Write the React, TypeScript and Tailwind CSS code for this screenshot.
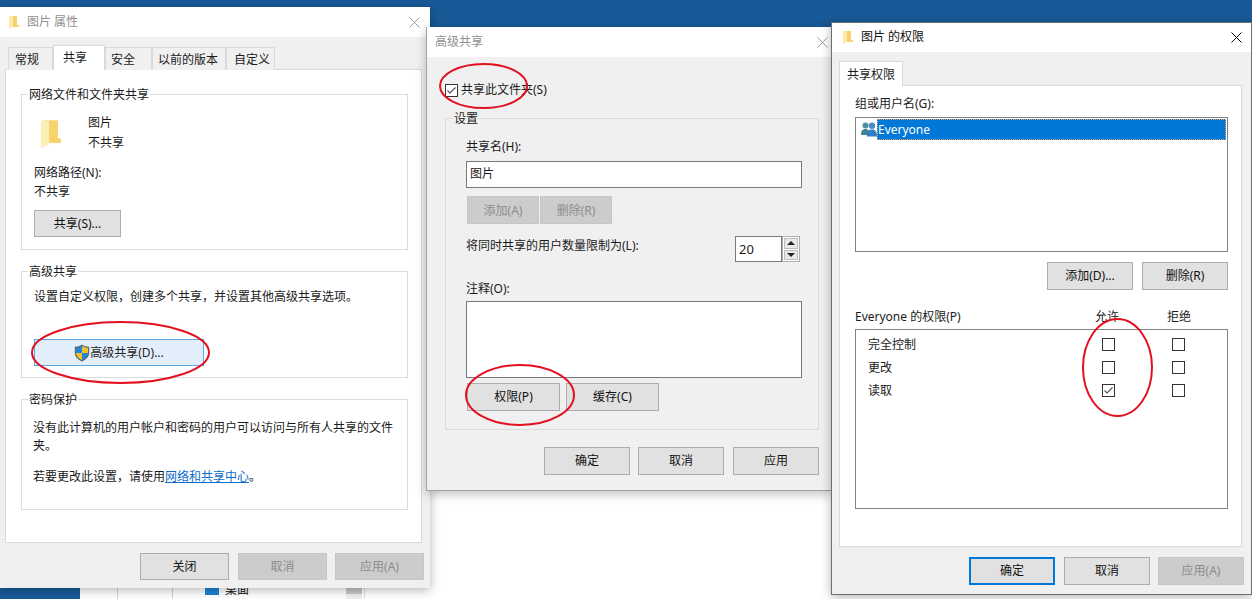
import React from "react";

const Folder = ({ large }: { large?: boolean }) =>
  large ? (
    <svg width="20" height="28" viewBox="0 0 20 28" className="shrink-0">
      <path d="M0 1 L7 0 L17 0 L17 19 L0 22Z" fill="#fbe39a" />
      <path d="M7 1 L17 1 L17 18 L20 19 L20 23 L7 23Z" fill="#f6d36e" />
      <path d="M0 1 L8 1 L8 24 L0 28Z" fill="#fdeeb4" />
    </svg>
  ) : (
    <svg width="10" height="13" viewBox="0 0 10 13" className="shrink-0">
      <path d="M3 0 L8 0 L8 9 L10 9 L10 11 L3 11Z" fill="#f6d36e" />
      <path d="M0 0 L4 0 L4 11 L0 13Z" fill="#fdeaa8" />
    </svg>
  );

const Close = ({ color }: { color: string }) => (
  <svg width="11" height="11" viewBox="0 0 11 11">
    <path d="M0.5 0.5 L10.5 10.5 M10.5 0.5 L0.5 10.5" stroke={color} strokeWidth="1" fill="none" />
  </svg>
);

const Check = ({ checked }: { checked?: boolean }) => (
  <div className="w-[13px] h-[13px] border border-[#333333] bg-white shrink-0 flex items-center justify-center">
    {checked && (
      <svg width="11" height="11" viewBox="0 0 11 11">
        <path d="M1.5 5.5 L4 8 L9.5 2.5" stroke="#555555" strokeWidth="1.2" fill="none" />
      </svg>
    )}
  </div>
);

type BtnKind = "normal" | "disabled" | "hover" | "default";
const Btn = ({ kind = "normal", className = "", children }: { kind?: BtnKind; className?: string; children: React.ReactNode }) => {
  const k =
    kind === "disabled"
      ? "bg-[#cccccc] border border-[#c6c6c6] text-[#8c8c8c]"
      : kind === "hover"
      ? "bg-[#e2eefa] border border-[#5aa7e8] text-[#222222]"
      : kind === "default"
      ? "bg-[#e1e1e1] border-2 border-[#0078d7] text-[#111111]"
      : "bg-[#e1e1e1] border border-[#adadad] text-[#111111]";
  return <div className={`flex items-center justify-center shrink-0 ${k} ${className}`}>{children}</div>;
};

const Group = ({ label, bg, className = "", children }: { label: string; bg: string; className?: string; children: React.ReactNode }) => (
  <div className={`relative border border-[#dcdcdc] ${className}`}>
    <span className={`absolute left-[6px] top-[-10px] leading-[20px] px-px ${bg}`}>{label}</span>
    {children}
  </div>
);

const Shield = () => (
  <svg width="16" height="18" viewBox="0 0 16 18" className="shrink-0">
    <path d="M8 0.5 C10 2 12.5 2.6 15.2 2.8 L15.2 9 C15.2 13 12 15.8 8 17.5 C4 15.8 0.8 13 0.8 9 L0.8 2.8 C3.5 2.6 6 2 8 0.5Z" fill="#5b6b7a" />
    <path d="M8 2 C6 3.2 4 3.7 2 3.9 L2 9 L8 9Z" fill="#1f86d8" />
    <path d="M8 2 C10 3.2 12 3.7 14 3.9 L14 9 L8 9Z" fill="#f6c02d" />
    <path d="M2 9 L8 9 L8 16 C5 14.6 2.2 12.4 2 9Z" fill="#f6c02d" />
    <path d="M14 9 L8 9 L8 16 C11 14.6 13.8 12.4 14 9Z" fill="#1f86d8" />
  </svg>
);

const Users = () => (
  <svg width="16" height="15" viewBox="0 0 16 15" className="shrink-0">
    <circle cx="4.5" cy="3.6" r="3" fill="#4f8f9c" />
    <path d="M0 13 C0 8.5 2 7 4.5 7 C7 7 9 8.5 9 13Z" fill="#3f8494" />
    <circle cx="11" cy="3.8" r="3.2" fill="#4a8fc9" />
    <path d="M6 14.5 C6 9 8.2 7.4 11 7.4 C13.8 7.4 16 9 16 14.5Z" fill="#2f7fc4" />
  </svg>
);

const Ring = ({ className, w, h }: { className: string; w: number; h: number }) => (
  <svg className={`absolute pointer-events-none ${className}`} viewBox={`0 0 ${w} ${h}`}>
    <ellipse cx={w / 2} cy={h / 2} rx={w / 2 - 1} ry={h / 2 - 1} fill="none" stroke="#e3101f" strokeWidth="2" />
  </svg>
);

const Tab = ({ className, children }: { className: string; children: React.ReactNode }) => (
  <div className={`border border-b-0 border-[#d9d9d9] bg-[#f0f0f0] h-[23px] leading-[24px] ${className}`}>{children}</div>
);

export default function App() {
  return (
    <div className="relative w-[1252px] h-[599px] overflow-hidden bg-[#185a98] text-[12px] leading-[20px] text-[#1a1a1a] font-['Noto_Sans','Noto_Sans_CJK_SC',sans-serif]">
      {/* explorer window behind */}
      <div className="absolute left-[80px] top-[300px] right-0 bottom-0 bg-white">
        <div className="absolute left-[37px] bottom-0 h-[20px] w-px bg-[#d0d0d0]" />
        <div className="absolute left-[92px] bottom-0 h-[20px] w-px bg-[#d0d0d0]" />
        <div className="absolute left-[125px] top-[284px] w-[14px] h-[11px] bg-[#1d84d8]" />
        <div className="absolute left-[145px] top-[280px] text-[#111111]">桌面</div>
        <div className="absolute left-[266px] top-[288px] w-[16px] h-[6px] bg-[#c8c8c8]" />
        <div className="absolute left-[266px] top-[294px] w-[16px] h-[5px] bg-[#eeeeee]" />
        <div className="absolute left-[284px] bottom-0 h-[20px] w-px bg-[#e0e0e0]" />
      </div>

      {/* Window 1: properties */}
      <div className="absolute left-0 top-[7px] w-[430px] h-[581px] bg-[#f0f0f0] shadow-[0_2px_10px_rgba(0,0,0,0.3)]">
        <div className="h-[30px] bg-white flex items-center pl-[9px] pr-[10px]">
          <Folder />
          <span className="ml-[8px] text-[#8f8f8f]">图片 属性</span>
          <span className="ml-auto flex"><Close color="#9a9a9a" /></span>
        </div>
        <div className="flex items-end pl-[8px] mt-[8px] h-[25px] -mb-px relative z-10">
          <Tab className="w-[45px] pl-[6px]">常规</Tab>
          <div className="w-[52px] h-[25px] border border-b-0 border-[#d9d9d9] bg-white pl-[9px] leading-[23px]">共享</div>
          <Tab className="w-[47px] pl-[5px]">安全</Tab>
          <Tab className="w-[74px] pl-[5px]">以前的版本</Tab>
          <Tab className="w-[49px] pl-[7px]">自定义</Tab>
        </div>
        <div className="ml-[5px] w-[417px] h-[474px] border border-[#d9d9d9] bg-white pt-[24px] pl-[15px]">
          <Group label="网络文件和文件夹共享" bg="bg-white" className="w-[387px] h-[156px] pt-[18px] pl-[12px]">
            <div className="flex items-start">
              <div className="ml-[7px] mt-[7px]"><Folder large /></div>
              <div className="ml-[27px]">
                <div>图片</div>
                <div>不共享</div>
              </div>
            </div>
            <div className="mt-[10px]">网络路径(N):</div>
            <div className="-mt-px">不共享</div>
            <Btn className="mt-[8px] w-[87px] h-[27px]">共享(S)...</Btn>
          </Group>
          <Group label="高级共享" bg="bg-white" className="mt-[21px] w-[387px] h-[107px] pt-[15px] pl-[12px]">
            <div>设置自定义权限，创建多个共享，并设置其他高级共享选项。</div>
            <Btn kind="hover" className="mt-[32px] w-[170px] h-[27px]">
              <Shield />
              <span>高级共享(D)...</span>
            </Btn>
          </Group>
          <Group label="密码保护" bg="bg-white" className="mt-[21px] w-[387px] h-[111px] pt-[19px] pl-[11px]">
            <div className="leading-[18px]">
              没有此计算机的用户帐户和密码的用户可以访问与所有人共享的文件
              <br />
              夹。
            </div>
            <div className="mt-[12px]">
              若要更改此设置，请使用<span className="text-[#0a6ccc] underline">网络和共享中心</span>。
            </div>
          </Group>
        </div>
        <div className="flex justify-end pr-[6px] mt-[10px] gap-[9px]">
          <Btn className="w-[89px] h-[27px]">关闭</Btn>
          <Btn kind="disabled" className="w-[89px] h-[27px]">取消</Btn>
          <Btn kind="disabled" className="w-[89px] h-[27px] -ml-px">应用(A)</Btn>
        </div>
      </div>

      {/* Window 2: advanced sharing */}
      <div className="absolute left-[426px] top-[27px] w-[406px] h-[464px] bg-[#f0f0f0] border-x border-b border-[#a3a3a3] shadow-[0_3px_10px_rgba(0,0,0,0.25)]">
        <div className="h-[30px] bg-white flex items-center pl-[8px] pr-[3px]">
          <span className="text-[#8f8f8f]">高级共享</span>
          <span className="ml-auto flex"><Close color="#9a9a9a" /></span>
        </div>
        <div className="pl-[18px]">
          <div className="flex items-center h-[20px] mt-[23px]">
            <Check checked />
            <span className="ml-[3px]">共享此文件夹(S)</span>
          </div>
          <Group label="设置" bg="bg-[#f0f0f0] ml-px" className="mt-[18px] w-[374px] h-[312px] pt-[18px] pl-[20px]">
            <div>共享名(H):</div>
            <div className="mt-[4px] w-[336px] h-[27px] border border-[#7a7a7a] bg-white pl-[3px] leading-[23px]">图片</div>
            <div className="flex mt-[8px] ml-px gap-px">
              <Btn kind="disabled" className="w-[72px] h-[28px] pt-[2px]">添加(A)</Btn>
              <Btn kind="disabled" className="w-[72px] h-[28px] pt-[2px]">删除(R)</Btn>
            </div>
            <div className="flex items-start mt-[12px] w-[334px]">
              <span className="leading-[18px] mt-px">将同时共享的用户数量限制为(L):</span>
              <div className="ml-auto flex h-[26px]">
                <div className="w-[47px] border border-[#7a7a7a] bg-white pl-[3px] leading-[24px] text-[13px]">20</div>
                <div className="w-[18px] border border-[#adadad] flex flex-col items-center justify-center gap-px bg-white p-px">
                  <div className="w-full flex-1 bg-[#e8e8e8] flex items-center justify-center border border-[#bdbdbd]">
                    <div className="w-0 h-0 border-x-[4px] border-x-transparent border-b-[4px] border-b-[#222222]" />
                  </div>
                  <div className="w-full flex-1 bg-[#e8e8e8] flex items-center justify-center border border-[#bdbdbd]">
                    <div className="w-0 h-0 border-x-[4px] border-x-transparent border-t-[4px] border-t-[#222222]" />
                  </div>
                </div>
              </div>
            </div>
            <div className="mt-[17px]">注释(O):</div>
            <div className="mt-[2px] w-[336px] h-[77px] border border-[#7a7a7a] bg-white" />
            <div className="flex mt-[5px] ml-px gap-[6px]">
              <Btn className="w-[93px] h-[28px]">权限(P)</Btn>
              <Btn className="w-[93px] h-[28px]">缓存(C)</Btn>
            </div>
          </Group>
          <div className="flex justify-end w-[374px] mt-[17px] gap-[8px]">
            <Btn className="w-[86px] h-[28px]">确定</Btn>
            <Btn className="w-[86px] h-[28px] mr-px">取消</Btn>
            <Btn className="w-[86px] h-[28px]">应用</Btn>
          </div>
        </div>
      </div>

      {/* Window 3: permissions */}
      <div className="absolute left-[831px] top-[22px] w-[421px] h-[573px] bg-[#f0f0f0] border border-[#6e6e6e] shadow-[0_2px_10px_rgba(0,0,0,0.3)]">
        <div className="h-[29px] bg-white flex items-center pl-[11px] pr-[9px]">
          <Folder />
          <span className="ml-[8px] text-[#111111] -mt-[2px]">图片 的权限</span>
          <span className="ml-auto flex"><Close color="#000000" /></span>
        </div>
        <div className="pl-[7px]">
          <div className="mt-[9px] ml-0 w-[64px] h-[25px] border border-b-0 border-[#d9d9d9] bg-white pl-[7px] leading-[25px] -mb-px relative z-10">共享权限</div>
          <div className="w-[403px] h-[462px] border border-[#d9d9d9] bg-white pt-[8px] pl-[15px]">
            <div>组或用户名(G):</div>
            <div className="mt-[3px] w-[373px] h-[135px] border border-[#828282] bg-white pt-px pl-[5px] pr-px">
              <div className="flex items-center">
                <Users />
                <div className="flex-1 h-[21px] bg-[#0078d7] border border-dotted border-[#f0a060] text-white leading-[19px]">Everyone</div>
              </div>
            </div>
            <div className="flex justify-end w-[373px] mt-[10px] gap-[9px]">
              <Btn className="w-[86px] h-[28px]">添加(D)...</Btn>
              <Btn className="w-[86px] h-[28px]">删除(R)</Btn>
            </div>
            <div className="mt-[17px] grid grid-cols-[240px_72px_auto]">
              <span>Everyone 的权限(P)</span>
              <span>允许</span>
              <span>拒绝</span>
            </div>
            <div className="mt-[2px] w-[373px] h-[180px] border border-[#828282] bg-white pt-[3px] pl-[12px]">
              {[["完全控制", false], ["更改", false], ["读取", true]].map(([name, on]) => (
                <div key={name as string} className="grid grid-cols-[234px_70px_13px] items-center h-[23px]">
                  <span>{name as string}</span>
                  <Check checked={on as boolean} />
                  <Check />
                </div>
              ))}
            </div>
          </div>
          <div className="flex justify-end w-[405px] mt-[10px] gap-[9px]">
            <Btn kind="default" className="w-[86px] h-[28px]">确定</Btn>
            <Btn className="w-[86px] h-[28px]">取消</Btn>
            <Btn kind="disabled" className="w-[86px] h-[28px] -ml-px">应用(A)</Btn>
          </div>
        </div>
      </div>

      {/* red annotation rings */}
      <Ring className="left-[31px] top-[321px] w-[179px] h-[63px]" w={179} h={63} />
      <Ring className="left-[439px] top-[63px] w-[89px] h-[46px]" w={89} h={46} />
      <Ring className="left-[465px] top-[364px] w-[110px] h-[62px]" w={110} h={62} />
      <Ring className="left-[1082px] top-[318px] w-[71px] h-[99px]" w={71} h={99} />
    </div>
  );
}
